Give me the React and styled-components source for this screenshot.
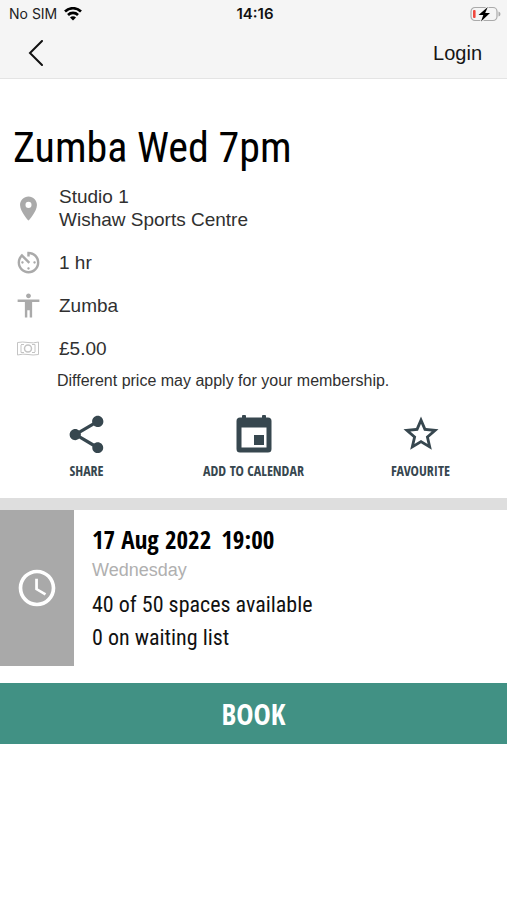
import React from "react";
import styled, { createGlobalStyle } from "styled-components";
import {
  MdLocationOn,
  MdAvTimer,
  MdAccessibility,
  MdShare,
  MdStarBorder,
  MdAccessTime,
} from "react-icons/md";

const GlobalStyle = createGlobalStyle`
  * { box-sizing: border-box; }
  body {
    margin: 0;
    background: #fff;
    color: #303030;
    font-family: "Liberation Sans", Arial, sans-serif;
  }
  h1, h2, p, ul { margin: 0; padding: 0; }
  button { font: inherit; color: inherit; border: 0; background: none; padding: 0; cursor: pointer; }
`;

const condensed = `"Roboto Condensed", "Liberation Sans Narrow", "Liberation Sans", sans-serif`;
const humanist = `"Open Sans Condensed", "Roboto Condensed", "Liberation Sans", sans-serif`;

const Header = styled.header`
  background: #f5f5f5;
  border-bottom: 1px solid #e4e4e4;
`;

const StatusBar = styled.div`
  display: grid;
  grid-template-columns: 1fr auto 1fr;
  align-items: center;
  height: 27px;
  padding: 0 6px 0 9px;
  font: 14px/20px Inter, sans-serif;
  color: #222;
`;

const Carrier = styled.div`
  display: flex;
  align-items: center;
  gap: 7px;
`;

const Time = styled.time`
  font-size: 15px;
  font-weight: 600;
  color: #111;
`;

const Battery = styled.svg`
  justify-self: end;
`;

const NavBar = styled.nav`
  display: flex;
  align-items: center;
  justify-content: space-between;
  height: 51px;
  padding: 0 25px 0 28px;
`;

const BackButton = styled.button`
  display: flex;
`;

const LoginLink = styled.a`
  font: 20px/24px "Liberation Sans", Arial, sans-serif;
  color: #151515;
  text-decoration: none;
`;

const Details = styled.section`
  padding: 42px 13px 17px;
`;

const Title = styled.h1`
  font: 400 42px/54px ${condensed};
  color: #000;
  margin-bottom: 10px;
`;

const InfoList = styled.ul`
  list-style: none;
  display: grid;
  gap: 20px;
  font-size: 19px;
  line-height: 23px;
`;

const InfoRow = styled.li`
  display: grid;
  grid-template-columns: 30px 1fr;
  column-gap: 16px;
  align-items: center;
`;

const InfoIcon = styled.span`
  display: flex;
  justify-content: center;
  height: 23px;
  align-items: center;
  color: #aaa;
`;

const PriceNote = styled.p`
  margin: 11px 0 0 44px;
  font-size: 16px;
  line-height: 20px;
`;

const Actions = styled.div`
  display: grid;
  grid-template-columns: repeat(3, 1fr);
  margin: 20px -10px 0;
`;

const ActionButton = styled.button`
  && {
    display: flex;
    flex-direction: column;
    align-items: center;
    gap: 4px;
    color: #37474f;
    font: 700 14px/20px ${humanist};
  }
`;

const ActionIcon = styled.span`
  display: flex;
  align-items: center;
  justify-content: center;
  height: 46px;
`;

const Session = styled.section`
  display: grid;
  grid-template-columns: 74px 1fr;
  border-top: 12px solid #dedede;
`;

const ClockPanel = styled.div`
  display: flex;
  align-items: center;
  justify-content: center;
  background: #a9a9a9;
  color: #fff;
`;

const SessionInfo = styled.div`
  padding: 12px 18px;
`;

const SessionDate = styled.h2`
  display: flex;
  gap: 10px;
  font: 700 25px/34px ${humanist};
  color: #000;
`;

const Weekday = styled.p`
  font-size: 18px;
  line-height: 28px;
  margin-bottom: 4px;
  color: #b0b0b0;
`;

const Availability = styled.p`
  font: 400 22px/33px "Noto Sans Condensed", ${condensed};
  color: #111;
`;

const BookButton = styled.button`
  && {
    display: block;
    width: 100%;
    height: 61px;
    margin-top: 17px;
    background: #419184;
    color: #fff;
    font: 700 29px/32px ${humanist};
  }
`;

const facts = [
  { icon: <MdLocationOn size={29} />, lines: ["Studio 1", "Wishaw Sports Centre"] },
  { icon: <MdAvTimer size={29} />, lines: ["1 hr"] },
  { icon: <MdAccessibility size={29} />, lines: ["Zumba"] },
  { icon: <BanknoteIcon />, lines: ["£5.00"] },
];

const actions = [
  { label: "SHARE", icon: <MdShare size={45} /> },
  { label: "ADD TO CALENDAR", icon: <CalendarIcon /> },
  { label: "FAVOURITE", icon: <MdStarBorder size={42} /> },
];

function BanknoteIcon() {
  return (
    <svg width="22" height="15" viewBox="0 0 22 15" fill="none" stroke="#c4c4c4" aria-hidden="true">
      <path d="M.5 1.5 Q5.5 .5 11 1.5 T21.5 1 V13.5 Q16 14.5 11 13.5 T.5 14 Z" />
      <path d="M4 4 V11.5 M18 3.5 V11 M4 3.5 H7 M15 3.5 H18 M4 11.5 H7 M15 11.5 H18" />
      <circle cx="11" cy="7.5" r="3.5" strokeWidth="1.5" />
    </svg>
  );
}

function CalendarIcon() {
  return (
    <svg width="36" height="38" viewBox="0 0 36 38" fill="currentColor" aria-hidden="true">
      <path d="M6 1 Q6 0 7 0 H9 Q10 0 10 1 V2.5 H26 V1 Q26 0 27 0 H29 Q30 0 30 1 V2.5 H32 Q35.5 2.5 35.5 6 V34 Q35.5 37.5 32 37.5 H4 Q.5 37.5 .5 34 V6 Q.5 2.5 4 2.5 H6 Z M5.5 12.5 V32.5 H30.5 V12.5 Z" fillRule="evenodd" />
      <rect x="18" y="20" width="10" height="10" />
    </svg>
  );
}

function WifiIcon() {
  return (
    <svg width="18" height="14" viewBox="0 0 18 14" fill="none" stroke="#000" strokeWidth="2.6" aria-hidden="true">
      <path d="M1 4.5 A11.3 11.3 0 0 1 17 4.5" />
      <path d="M4 8 A7 7 0 0 1 14 8" />
      <path d="M9 13.5 L6 10.5 A4.2 4.2 0 0 1 12 10.5 Z" fill="#000" stroke="none" />
    </svg>
  );
}

export default function App() {
  return (
    <>
      <GlobalStyle />
      <Header>
        <StatusBar>
          <Carrier>
            No SIM
            <WifiIcon />
          </Carrier>
          <Time>14:16</Time>
          <Battery width="31" height="16" viewBox="0 0 31 16" role="img" aria-label="Battery low, charging">
            <rect x="1" y="1.5" width="26" height="13" rx="4" fill="none" stroke="#aaa" strokeWidth="1.2" />
            <path d="M28.5 5.5 Q30.5 6 30.5 8 T28.5 10.5 Z" fill="#aaa" />
            <rect x="3" y="4" width="2.6" height="8" rx="1" fill="#f0483e" />
            <path d="M17.8 1 L8.5 9 H13.3 L11 15.5 L20 7 H15.2 Z" fill="#000" stroke="#f5f5f5" strokeWidth="2" paintOrder="stroke" />
          </Battery>
        </StatusBar>
        <NavBar>
          <BackButton aria-label="Back">
            <svg width="15" height="26" viewBox="0 0 15 26" fill="none" stroke="#111" strokeWidth="2" strokeLinecap="round">
              <path d="M14 1 L2 13 L14 25" />
            </svg>
          </BackButton>
          <LoginLink href="#login">Login</LoginLink>
        </NavBar>
      </Header>
      <main>
        <Details>
          <Title>Zumba Wed 7pm</Title>
          <InfoList>
            {facts.map(({ icon, lines }) => (
              <InfoRow key={lines[0]}>
                <InfoIcon>{icon}</InfoIcon>
                <div>
                  {lines.map((line) => (
                    <p key={line}>{line}</p>
                  ))}
                </div>
              </InfoRow>
            ))}
          </InfoList>
          <PriceNote>Different price may apply for your membership.</PriceNote>
          <Actions>
            {actions.map(({ label, icon }) => (
              <ActionButton key={label}>
                <ActionIcon>{icon}</ActionIcon>
                {label}
              </ActionButton>
            ))}
          </Actions>
        </Details>
        <Session>
          <ClockPanel>
            <MdAccessTime size={44} />
          </ClockPanel>
          <SessionInfo>
            <SessionDate>
              <span>17 Aug 2022</span>
              <span>19:00</span>
            </SessionDate>
            <Weekday>Wednesday</Weekday>
            <Availability>40 of 50 spaces available</Availability>
            <Availability>0 on waiting list</Availability>
          </SessionInfo>
        </Session>
        <BookButton>BOOK</BookButton>
      </main>
    </>
  );
}
